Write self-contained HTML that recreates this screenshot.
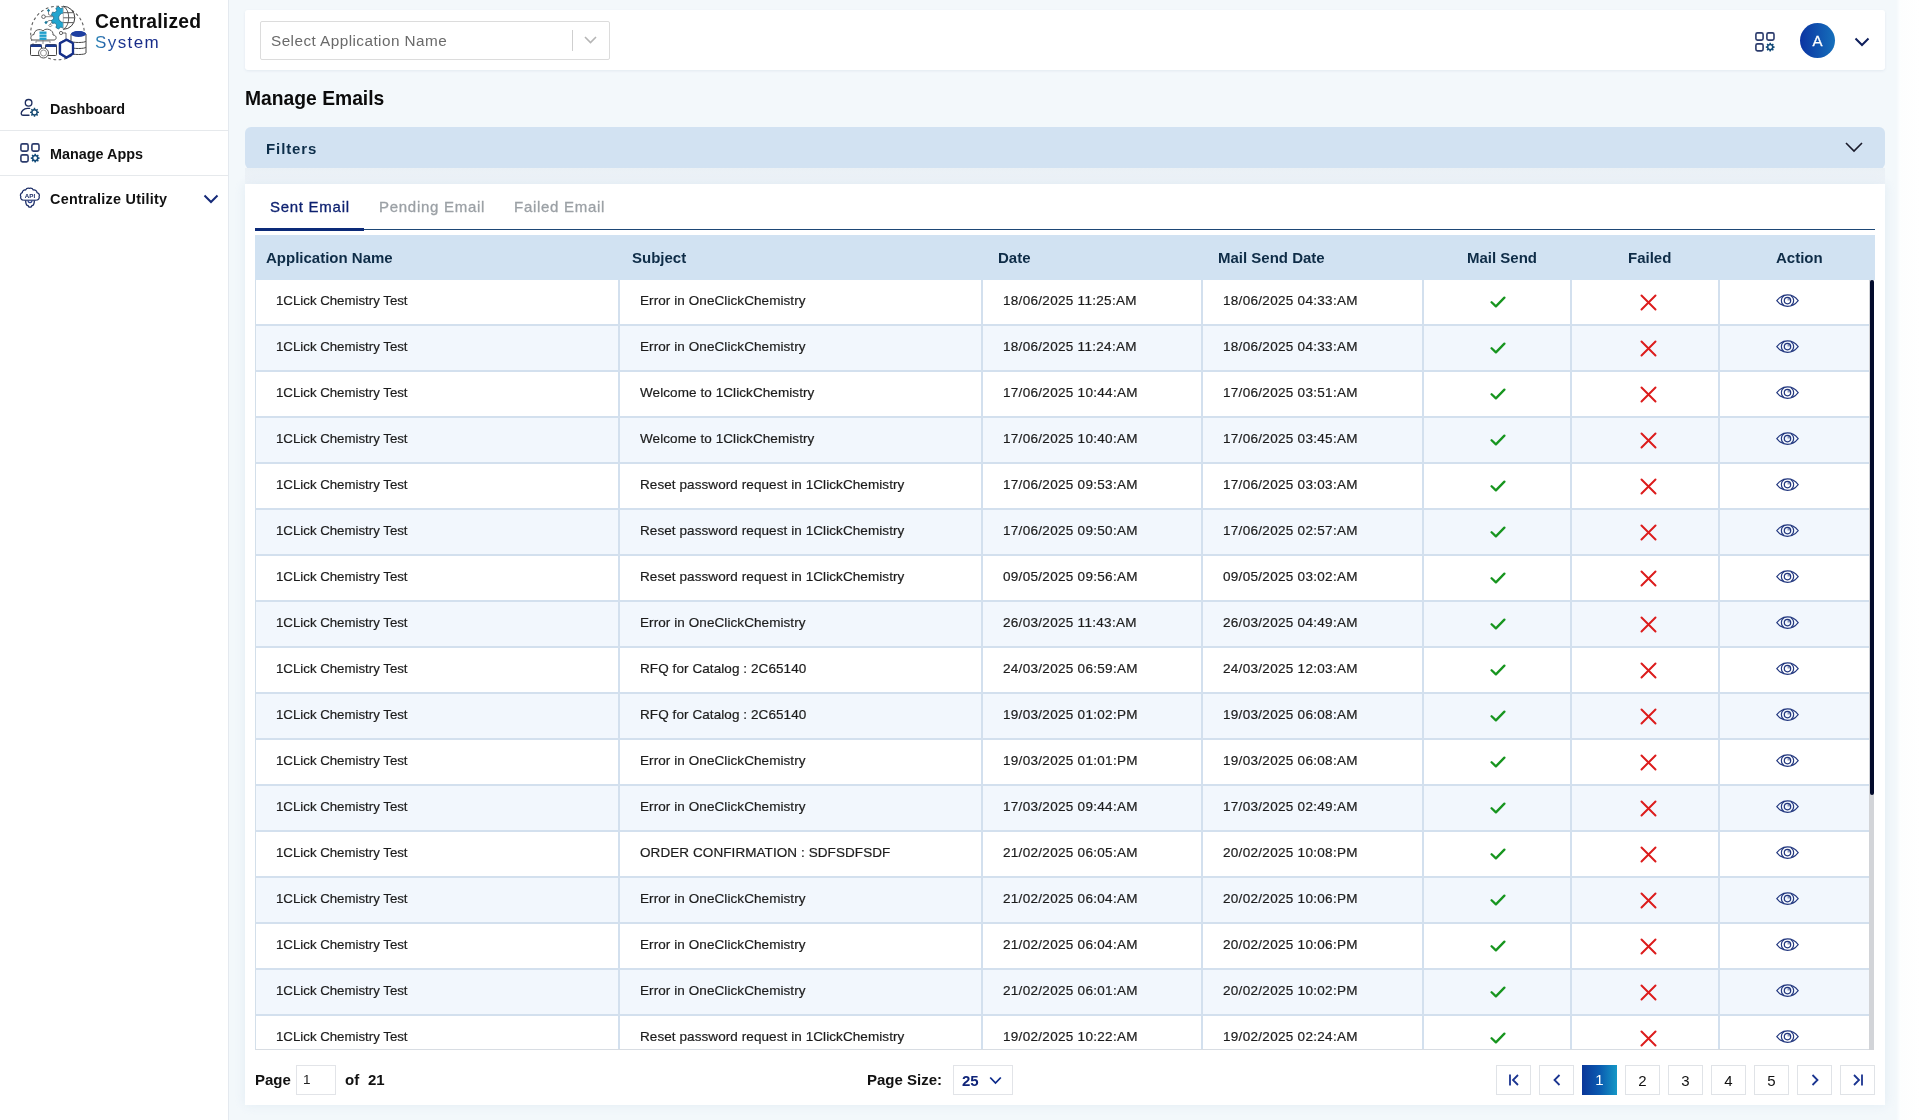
<!DOCTYPE html>
<html><head><meta charset="utf-8"><title>Manage Emails</title>
<style>
*{box-sizing:border-box;margin:0;padding:0}
html,body{width:1920px;height:1120px;overflow:hidden}
body{font-family:"Liberation Sans",sans-serif;background:#f3f8fb;position:relative;color:#222}
.abs{position:absolute}
#side{position:absolute;left:0;top:0;width:229px;height:1120px;background:#fff;border-right:1px solid #e4e9ef}
.nav{position:absolute;left:0;width:228px;height:45px}
.nav .t{position:absolute;left:50px;font-weight:bold;font-size:14.4px;color:#111;white-space:nowrap}
.sep{position:absolute;left:0;width:228px;height:1px;background:#e6e9ec}
#topbar{position:absolute;left:245px;top:10px;width:1640px;height:60px;background:#fff;border-radius:3px;box-shadow:0 1px 3px rgba(40,70,110,.08)}
#sel{position:absolute;left:15px;top:11px;width:350px;height:39px;border:1px solid #dcdcdc;border-radius:2px;background:#fff}
#title{position:absolute;left:245px;top:87.8px;font-size:19.3px;font-weight:bold;color:#0b0b0b;white-space:nowrap}
#filters{position:absolute;left:245px;top:127px;width:1640px;height:42px;background:#d2e2f2;border-radius:6px}
#card{position:absolute;left:245px;top:184px;width:1640px;height:921px;background:#fff;box-shadow:0 0 10px rgba(215,228,240,.6)}
.tab{position:absolute;top:13.5px;font-size:15px;letter-spacing:.72px;-webkit-text-stroke:.3px;white-space:nowrap}
#tabline{position:absolute;left:10px;top:45px;width:1620px;height:1px;background:#1e4876}
#tabact{position:absolute;left:10px;top:44px;width:109px;height:3px;background:#0c2a78}
#thead{position:absolute;left:10px;top:51px;width:1620px;height:45px;background:#d1e2f2}
.th{position:absolute;top:0;height:45px;line-height:45px;font-size:15px;font-weight:bold;color:#0e2c47;white-space:nowrap}
#tbody{position:absolute;left:10px;top:96px;width:1614px;height:770px;overflow:hidden;border-left:1px solid #d3dfea;border-bottom:1px solid #d8dde3}
.r{position:absolute;left:0;width:1613px;height:46px;background:#fff}
.r.alt{background:#f2f7fd}
.c{position:absolute;top:0;height:46px;border-right:2px solid #d3e0ee;border-bottom:2px solid #d3e0ee}
.c span{position:absolute;left:20px;top:13px;font-size:13.5px;color:#1c1c1c;-webkit-text-stroke:.2px #1c1c1c;white-space:nowrap}
.c span.dt{letter-spacing:.3px}
.c span.sj{letter-spacing:.08px}
.c i{position:absolute;display:block;font-style:normal;line-height:0}
.chk{left:66px;top:16px}
.crs{left:68px;top:14px}
.eye{left:56px;top:14px}
#sb{position:absolute;left:1624px;top:96px;width:5px;height:770px;background:#d2d4d8}
#sbt{position:absolute;left:1625px;top:96px;width:4px;height:515px;background:#030b2c;border-radius:2px}
.pl{position:absolute;font-size:15px;font-weight:bold;color:#111;white-space:nowrap}
.pb{position:absolute;top:881px;width:35px;height:30px;border:1px solid #e0e3e7;background:#fff;text-align:center;line-height:29px;font-size:15px;color:#111}
</style></head><body>
<div id="root" style="position:absolute;left:0;top:0;width:1920px;height:1120px;will-change:transform">

<div id="side">
  <svg class="abs" style="left:28px;top:4px" width="60" height="58" viewBox="0 0 60 58">
    <circle cx="29.5" cy="29" r="26.8" fill="none" stroke="#5a5a5a" stroke-width="1.05" stroke-dasharray="2.8 2.6"/>
    <defs><clipPath id="lh"><rect x="0" y="0" width="35.3" height="30"/></clipPath><linearGradient id="bd" x1="0" y1="0" x2="1" y2="0"><stop offset="0" stop-color="#1f9fcc"/><stop offset="1" stop-color="#17307a"/></linearGradient></defs>
    <path d="M15.5 12.7 H25 M20.5 8 V10.5 L24 12 M18 18.5 L21 16.5 H25 M22.3 20 L25 17" fill="none" stroke="#6a6a6a" stroke-width=".8"/>
    <g clip-path="url(#lh)"><path d="M44.87 11.70 L47.39 12.19 L47.39 15.41 L44.87 15.90 L43.98 18.34 L45.60 20.34 L43.53 22.81 L41.28 21.56 L39.03 22.86 L38.99 25.43 L35.81 25.99 L34.89 23.59 L32.34 23.14 L30.65 25.08 L27.86 23.47 L28.69 21.04 L27.03 19.05 L24.49 19.45 L23.38 16.42 L25.59 15.10 L25.59 12.50 L23.38 11.18 L24.49 8.15 L27.03 8.55 L28.69 6.56 L27.86 4.13 L30.65 2.52 L32.34 4.46 L34.89 4.01 L35.81 1.61 L38.99 2.17 L39.03 4.74 L41.28 6.04 L43.53 4.79 L45.60 7.26 L43.98 9.26 Z M39.90 13.80 A4.6 4.6 0 1 0 30.70 13.80 A4.6 4.6 0 1 0 39.90 13.80 Z" fill="#22a5cf" fill-rule="evenodd" stroke="#17607e" stroke-width=".7"/></g>
    <path d="M35.3 2.3 A11.5 11.5 0 0 1 35.3 25.3" fill="#fff" stroke="#3a3a3a" stroke-width="1"/>
    <path d="M35.3 2.3 V25.3" stroke="#b0b0b0" stroke-width=".9"/>
    <path d="M35.3 2.3 C42.5 5.5 42.5 22 35.3 25.3 M35.3 8.7 H45.6 M35.3 13.8 H46.8 M35.3 18.6 H45.6" fill="none" stroke="#4a4a4a" stroke-width=".9"/>
    <path d="M20.5 4.8 L22.1 6.5 L20.5 8.2 L18.9 6.5 Z" fill="#1a7a9a"/>
    <circle cx="15.5" cy="12.7" r="1.8" fill="#fff" stroke="#555" stroke-width=".9"/>
    <path d="M18 16.8 L19.7 18.5 L18 20.2 L16.3 18.5 Z" fill="#1a7a9a"/>
    <path d="M22.3 20 L23.8 21.5 L22.3 23 L20.8 21.5 Z" fill="#fff" stroke="#666" stroke-width=".8"/>
    <path d="M5 36 C2 36 2 31 6 30.5 C6 26 12 24 15 27 C18 23 26 26 25 31 C29 31 29 36 26 36 Z" fill="#fff" stroke="#555" stroke-width="1"/>
    <rect x="11.5" y="27.5" width="7" height="2.4" fill="#1f9fcc"/><rect x="11.5" y="30.5" width="7" height="2.4" fill="#1f9fcc"/><rect x="11.5" y="33.5" width="7" height="2.4" fill="#1f9fcc"/>
    <path d="M15 36 v4 M8 39 v-2 H22 v2" fill="none" stroke="#777" stroke-width=".8"/>
    <rect x="2.5" y="40.5" width="11" height="11" rx="1" fill="#fff" stroke="#444" stroke-width="1"/>
    <rect x="2.5" y="40.5" width="11" height="2.5" fill="#1a3a8f"/>
    <rect x="17.5" y="40.5" width="11" height="11" rx="1" fill="#fff" stroke="#444" stroke-width="1"/>
    <rect x="17.5" y="40.5" width="11" height="2.5" fill="#1a3a8f"/>
    <circle cx="15.5" cy="49" r="5" fill="#fff" stroke="#555" stroke-width="1"/>
    <circle cx="15.5" cy="49" r="3" fill="#fff" stroke="#777" stroke-width=".8"/>
    <circle cx="33" cy="29" r="1.6" fill="none" stroke="#444" stroke-width=".8"/>
    <path d="M34.5 29 H38 V36" fill="none" stroke="#444" stroke-width=".8"/>
    <path d="M38.5 35.8 L45 39.3 V49.6 L38.5 53.6 L32 49.6 V39.3 Z" fill="#fff" stroke="#16308a" stroke-width="2.3" stroke-linejoin="round"/>
    <ellipse cx="50.5" cy="30" rx="7.5" ry="3" fill="#1e3fa0"/>
    <path d="M43 30 V49 C43 51 58 51 58 49 V30" fill="#fff" stroke="#444" stroke-width="1"/>
    <path d="M43 37 C43 39 58 39 58 37 M43 43 C43 45 58 45 58 43" fill="none" stroke="#444" stroke-width="1"/>
    <ellipse cx="50.5" cy="30" rx="7.5" ry="3" fill="#1e3fa0"/>
    <path d="M38.5 35.8 L45 39.3 V49.6 L38.5 53.6 L32 49.6 V39.3 Z" fill="#fff" stroke="#16308a" stroke-width="2.3" stroke-linejoin="round"/>
  </svg>
  <div class="abs" style="left:95px;top:11px;font-size:19.3px;letter-spacing:.2px;font-weight:bold;color:#0d0d0d;white-space:nowrap">Centralized</div>
  <div class="abs" style="left:95px;top:33px;font-size:17px;letter-spacing:1.4px;white-space:nowrap;background:linear-gradient(90deg,#2a88b8,#1c3a96 32%,#172a86 55%,#152a8a);-webkit-background-clip:text;background-clip:text;color:transparent">System</div>

  <div class="nav" style="top:86px">
    <svg class="abs" style="left:15px;top:9px" width="30" height="30" viewBox="0 0 30 30"><circle cx="13.6" cy="7.8" r="3.3" fill="none" stroke="#1d2d5e" stroke-width="1.35"/><path d="M14.6 13.4 H12.5 C8.5 13.4 6.2 16.3 6.2 18.6 C6.2 19.7 6.8 20.2 7.8 20.2 H14" fill="none" stroke="#1d2d5e" stroke-width="1.35" stroke-linecap="round"/><path d="M22.80 16.48 L23.95 16.63 L23.95 17.97 L22.80 18.12 L22.41 19.05 L23.12 19.97 L22.17 20.92 L21.25 20.21 L20.32 20.60 L20.17 21.75 L18.83 21.75 L18.68 20.60 L17.75 20.21 L16.83 20.92 L15.88 19.97 L16.59 19.05 L16.20 18.12 L15.05 17.97 L15.05 16.63 L16.20 16.48 L16.59 15.55 L15.88 14.63 L16.83 13.68 L17.75 14.39 L18.68 14.00 L18.83 12.85 L20.17 12.85 L20.32 14.00 L21.25 14.39 L22.17 13.68 L23.12 14.63 L22.41 15.55 Z M21.40 17.30 A1.9 1.9 0 1 0 17.60 17.30 A1.9 1.9 0 1 0 21.40 17.30 Z" fill="#164a72" fill-rule="evenodd"/></svg>
    <div class="t" style="top:14.5px">Dashboard</div>
  </div>
  <div class="sep" style="top:130px"></div>
  <div class="nav" style="top:131px">
    <svg class="abs" style="left:15px;top:7px" width="30" height="30" viewBox="0 0 30 30"><rect x="5.9" y="5.9" width="7.2" height="7.2" rx="1.6" fill="none" stroke="#2b3b6c" stroke-width="1.6"/><rect x="16.9" y="5.9" width="7.1" height="7.2" rx="1.6" fill="none" stroke="#2b3b6c" stroke-width="1.6"/><rect x="5.9" y="16.9" width="7.2" height="7.0" rx="1.6" fill="none" stroke="#2b3b6c" stroke-width="1.6"/><path d="M23.50 19.28 L24.65 19.43 L24.65 20.77 L23.50 20.92 L23.11 21.85 L23.82 22.77 L22.87 23.72 L21.95 23.01 L21.02 23.40 L20.87 24.55 L19.53 24.55 L19.38 23.40 L18.45 23.01 L17.53 23.72 L16.58 22.77 L17.29 21.85 L16.90 20.92 L15.75 20.77 L15.75 19.43 L16.90 19.28 L17.29 18.35 L16.58 17.43 L17.53 16.48 L18.45 17.19 L19.38 16.80 L19.53 15.65 L20.87 15.65 L21.02 16.80 L21.95 17.19 L22.87 16.48 L23.82 17.43 L23.11 18.35 Z M22.00 20.10 A1.8 1.8 0 1 0 18.40 20.10 A1.8 1.8 0 1 0 22.00 20.10 Z" fill="#124a78" fill-rule="evenodd"/></svg>
    <div class="t" style="top:15px">Manage Apps</div>
  </div>
  <div class="sep" style="top:175px"></div>
  <div class="nav" style="top:176px">
    <svg class="abs" style="left:15px;top:7px" width="30" height="30" viewBox="0 0 30 30"><path d="M8.2 17.2 C6 16.8 5.3 14.9 5.8 13.4 C4.9 12.2 5.6 10 7.3 9.6 C7.3 7.8 9 6.6 10.6 7 C11.3 5.6 12.9 5 14.3 5.3 C15.6 5 17.6 5.5 18.3 7 C20.2 6.6 22 7.9 22 9.6 C23.9 10 24.9 12 24.1 13.5 C24.7 15.3 23.5 17 21.6 17.2" fill="none" stroke="#1b2c66" stroke-width="1.25"/><text x="15" y="14.6" text-anchor="middle" font-family="Liberation Sans" font-weight="bold" font-size="6.2" fill="#1b2c66">API</text><path d="M8.2 17.2 H21.6" stroke="#1b2c66" stroke-width="1.1"/><path d="M10.6 17.4 C10.6 19 11 20.6 11.6 22 L13 22.6 L14 24.2 H16 L17 22.6 L18.4 22 C19 20.6 19.4 19 19.4 17.4" fill="none" stroke="#1b2c66" stroke-width="1.3"/><path d="M13 17.6 C13 20.2 17 20.2 17 17.6" fill="none" stroke="#2a3f8a" stroke-width="1.2"/></svg>
    <div class="t" style="top:15px;letter-spacing:.25px">Centralize Utility</div>
    <svg class="abs" style="left:203px;top:18px" width="16" height="10" viewBox="0 0 16 10"><path d="M1.5 1.5 L8 8 L14.5 1.5" fill="none" stroke="#152a78" stroke-width="2"/></svg>
  </div>
</div>

<div class="abs" style="left:1896px;top:0;width:24px;height:1120px;background:linear-gradient(90deg,rgba(255,255,255,0),#fdfefe 5px,#fff)"></div>
<div id="topbar">
  <div id="sel">
    <div class="abs" style="left:10px;top:10px;font-size:15.3px;letter-spacing:.45px;color:#6a6a6a;white-space:nowrap">Select Application Name</div>
    <div class="abs" style="left:311px;top:8px;width:1px;height:21px;background:#cfcfcf"></div>
    <svg class="abs" style="left:323px;top:14px" width="13" height="8" viewBox="0 0 13 8"><path d="M1 1 L6.5 6.5 L12 1" fill="none" stroke="#b5b5b5" stroke-width="1.6"/></svg>
  </div>
  <svg class="abs" style="left:1505px;top:17px" width="30" height="30" viewBox="0 0 30 30"><rect x="5.9" y="5.9" width="7.2" height="7.2" rx="1.6" fill="none" stroke="#2b3b6c" stroke-width="1.6"/><rect x="16.9" y="5.9" width="7.1" height="7.2" rx="1.6" fill="none" stroke="#2b3b6c" stroke-width="1.6"/><rect x="5.9" y="16.9" width="7.2" height="7.0" rx="1.6" fill="none" stroke="#2b3b6c" stroke-width="1.6"/><path d="M23.50 19.28 L24.65 19.43 L24.65 20.77 L23.50 20.92 L23.11 21.85 L23.82 22.77 L22.87 23.72 L21.95 23.01 L21.02 23.40 L20.87 24.55 L19.53 24.55 L19.38 23.40 L18.45 23.01 L17.53 23.72 L16.58 22.77 L17.29 21.85 L16.90 20.92 L15.75 20.77 L15.75 19.43 L16.90 19.28 L17.29 18.35 L16.58 17.43 L17.53 16.48 L18.45 17.19 L19.38 16.80 L19.53 15.65 L20.87 15.65 L21.02 16.80 L21.95 17.19 L22.87 16.48 L23.82 17.43 L23.11 18.35 Z M22.00 20.10 A1.8 1.8 0 1 0 18.40 20.10 A1.8 1.8 0 1 0 22.00 20.10 Z" fill="#124a78" fill-rule="evenodd"/></svg>
  <div class="abs" style="left:1555px;top:13px;width:35px;height:35px;border-radius:50%;background:linear-gradient(90deg,#0b34a2,#1670bb);color:#fff;font-size:15px;-webkit-text-stroke:.3px #fff;text-align:center;line-height:35px">A</div>
  <svg class="abs" style="left:1609px;top:27px" width="16" height="10" viewBox="0 0 16 10"><path d="M1.5 1.5 L8 8 L14.5 1.5" fill="none" stroke="#0f1f5c" stroke-width="2"/></svg>
</div>

<div id="title">Manage Emails</div>

<div id="filters">
  <div class="abs" style="left:21px;top:12.8px;font-size:15px;font-weight:bold;letter-spacing:.9px;color:#0d2e4a">Filters</div>
  <svg class="abs" style="left:1600px;top:15px" width="18" height="11" viewBox="0 0 18 11"><path d="M1 1 L9 9 L17 1" fill="none" stroke="#1a1a2a" stroke-width="1.6"/></svg>
</div>

<div class="abs" style="left:245px;top:168px;width:1640px;height:16px;background:linear-gradient(#eaf0f5,#eef3f8)"></div>
<div id="card">
  <div class="tab" style="left:25px;color:#0d2170">Sent Email</div>
  <div class="tab" style="left:134px;color:#9ba0a5">Pending Email</div>
  <div class="tab" style="left:269px;color:#9ba0a5">Failed Email</div>
  <div id="tabline"></div>
  <div id="tabact"></div>
  <div id="thead">
    <div class="th" style="left:11px">Application Name</div>
    <div class="th" style="left:377px">Subject</div>
    <div class="th" style="left:743px">Date</div>
    <div class="th" style="left:963px">Mail Send Date</div>
    <div class="th" style="left:1212px">Mail Send</div>
    <div class="th" style="left:1373px">Failed</div>
    <div class="th" style="left:1521px">Action</div>
  </div>
  <div id="tbody">
    <div class="r" style="top:0px"><div class="c" style="left:0;width:364px"><span style="font-size:13.25px">1CLick Chemistry Test</span></div><div class="c" style="left:364px;width:363px"><span class="sj">Error in OneClickChemistry</span></div><div class="c" style="left:727px;width:220px"><span class="dt">18/06/2025 11:25:AM</span></div><div class="c" style="left:947px;width:221px"><span class="dt">18/06/2025 04:33:AM</span></div><div class="c ic" style="left:1168px;width:148px"><i class="chk"><svg width="16" height="12" viewBox="0 0 16 12"><path d="M1.6 6.2 L5.9 10.4 L14.4 1.6" fill="none" stroke="#17951f" stroke-width="2.3" stroke-linecap="round" stroke-linejoin="round"/></svg></i></div><div class="c ic" style="left:1316px;width:148px"><i class="crs"><svg width="17" height="17" viewBox="0 0 17 17"><path d="M1.5 1.5 L15.5 15.5 M15.5 1.5 L1.5 15.5" fill="none" stroke="#dc1c1c" stroke-width="2" stroke-linecap="round"/></svg></i></div><div class="c ic" style="left:1464px;width:150px;border-right:none"><i class="eye"><svg width="23" height="14" viewBox="0 0 23 14"><path d="M0.8 6.6 C4.5 1.8 8 0.9 11.5 0.9 C15 0.9 18.5 1.8 22.2 6.6 C18.5 11.4 15 12.3 11.5 12.3 C8 12.3 4.5 11.4 0.8 6.6 Z" fill="none" stroke="#22377f" stroke-width="1.15"/><path d="M8.2 1.6 A5.8 5.8 0 0 0 8.2 11.6 M14.8 1.6 A5.8 5.8 0 0 1 14.8 11.6" fill="none" stroke="#22377f" stroke-width="1.1"/><circle cx="11.5" cy="6.6" r="3.2" fill="none" stroke="#22377f" stroke-width="1.25"/><path d="M11.5 3.4 A3.2 3.2 0 0 1 14.7 6.6 L11.5 6.6 Z" fill="#22377f" opacity=".5"/></svg></i></div></div><div class="r alt" style="top:46px"><div class="c" style="left:0;width:364px"><span style="font-size:13.25px">1CLick Chemistry Test</span></div><div class="c" style="left:364px;width:363px"><span class="sj">Error in OneClickChemistry</span></div><div class="c" style="left:727px;width:220px"><span class="dt">18/06/2025 11:24:AM</span></div><div class="c" style="left:947px;width:221px"><span class="dt">18/06/2025 04:33:AM</span></div><div class="c ic" style="left:1168px;width:148px"><i class="chk"><svg width="16" height="12" viewBox="0 0 16 12"><path d="M1.6 6.2 L5.9 10.4 L14.4 1.6" fill="none" stroke="#17951f" stroke-width="2.3" stroke-linecap="round" stroke-linejoin="round"/></svg></i></div><div class="c ic" style="left:1316px;width:148px"><i class="crs"><svg width="17" height="17" viewBox="0 0 17 17"><path d="M1.5 1.5 L15.5 15.5 M15.5 1.5 L1.5 15.5" fill="none" stroke="#dc1c1c" stroke-width="2" stroke-linecap="round"/></svg></i></div><div class="c ic" style="left:1464px;width:150px;border-right:none"><i class="eye"><svg width="23" height="14" viewBox="0 0 23 14"><path d="M0.8 6.6 C4.5 1.8 8 0.9 11.5 0.9 C15 0.9 18.5 1.8 22.2 6.6 C18.5 11.4 15 12.3 11.5 12.3 C8 12.3 4.5 11.4 0.8 6.6 Z" fill="none" stroke="#22377f" stroke-width="1.15"/><path d="M8.2 1.6 A5.8 5.8 0 0 0 8.2 11.6 M14.8 1.6 A5.8 5.8 0 0 1 14.8 11.6" fill="none" stroke="#22377f" stroke-width="1.1"/><circle cx="11.5" cy="6.6" r="3.2" fill="none" stroke="#22377f" stroke-width="1.25"/><path d="M11.5 3.4 A3.2 3.2 0 0 1 14.7 6.6 L11.5 6.6 Z" fill="#22377f" opacity=".5"/></svg></i></div></div><div class="r" style="top:92px"><div class="c" style="left:0;width:364px"><span style="font-size:13.25px">1CLick Chemistry Test</span></div><div class="c" style="left:364px;width:363px"><span class="sj">Welcome to 1ClickChemistry</span></div><div class="c" style="left:727px;width:220px"><span class="dt">17/06/2025 10:44:AM</span></div><div class="c" style="left:947px;width:221px"><span class="dt">17/06/2025 03:51:AM</span></div><div class="c ic" style="left:1168px;width:148px"><i class="chk"><svg width="16" height="12" viewBox="0 0 16 12"><path d="M1.6 6.2 L5.9 10.4 L14.4 1.6" fill="none" stroke="#17951f" stroke-width="2.3" stroke-linecap="round" stroke-linejoin="round"/></svg></i></div><div class="c ic" style="left:1316px;width:148px"><i class="crs"><svg width="17" height="17" viewBox="0 0 17 17"><path d="M1.5 1.5 L15.5 15.5 M15.5 1.5 L1.5 15.5" fill="none" stroke="#dc1c1c" stroke-width="2" stroke-linecap="round"/></svg></i></div><div class="c ic" style="left:1464px;width:150px;border-right:none"><i class="eye"><svg width="23" height="14" viewBox="0 0 23 14"><path d="M0.8 6.6 C4.5 1.8 8 0.9 11.5 0.9 C15 0.9 18.5 1.8 22.2 6.6 C18.5 11.4 15 12.3 11.5 12.3 C8 12.3 4.5 11.4 0.8 6.6 Z" fill="none" stroke="#22377f" stroke-width="1.15"/><path d="M8.2 1.6 A5.8 5.8 0 0 0 8.2 11.6 M14.8 1.6 A5.8 5.8 0 0 1 14.8 11.6" fill="none" stroke="#22377f" stroke-width="1.1"/><circle cx="11.5" cy="6.6" r="3.2" fill="none" stroke="#22377f" stroke-width="1.25"/><path d="M11.5 3.4 A3.2 3.2 0 0 1 14.7 6.6 L11.5 6.6 Z" fill="#22377f" opacity=".5"/></svg></i></div></div><div class="r alt" style="top:138px"><div class="c" style="left:0;width:364px"><span style="font-size:13.25px">1CLick Chemistry Test</span></div><div class="c" style="left:364px;width:363px"><span class="sj">Welcome to 1ClickChemistry</span></div><div class="c" style="left:727px;width:220px"><span class="dt">17/06/2025 10:40:AM</span></div><div class="c" style="left:947px;width:221px"><span class="dt">17/06/2025 03:45:AM</span></div><div class="c ic" style="left:1168px;width:148px"><i class="chk"><svg width="16" height="12" viewBox="0 0 16 12"><path d="M1.6 6.2 L5.9 10.4 L14.4 1.6" fill="none" stroke="#17951f" stroke-width="2.3" stroke-linecap="round" stroke-linejoin="round"/></svg></i></div><div class="c ic" style="left:1316px;width:148px"><i class="crs"><svg width="17" height="17" viewBox="0 0 17 17"><path d="M1.5 1.5 L15.5 15.5 M15.5 1.5 L1.5 15.5" fill="none" stroke="#dc1c1c" stroke-width="2" stroke-linecap="round"/></svg></i></div><div class="c ic" style="left:1464px;width:150px;border-right:none"><i class="eye"><svg width="23" height="14" viewBox="0 0 23 14"><path d="M0.8 6.6 C4.5 1.8 8 0.9 11.5 0.9 C15 0.9 18.5 1.8 22.2 6.6 C18.5 11.4 15 12.3 11.5 12.3 C8 12.3 4.5 11.4 0.8 6.6 Z" fill="none" stroke="#22377f" stroke-width="1.15"/><path d="M8.2 1.6 A5.8 5.8 0 0 0 8.2 11.6 M14.8 1.6 A5.8 5.8 0 0 1 14.8 11.6" fill="none" stroke="#22377f" stroke-width="1.1"/><circle cx="11.5" cy="6.6" r="3.2" fill="none" stroke="#22377f" stroke-width="1.25"/><path d="M11.5 3.4 A3.2 3.2 0 0 1 14.7 6.6 L11.5 6.6 Z" fill="#22377f" opacity=".5"/></svg></i></div></div><div class="r" style="top:184px"><div class="c" style="left:0;width:364px"><span style="font-size:13.25px">1CLick Chemistry Test</span></div><div class="c" style="left:364px;width:363px"><span class="sj">Reset password request in 1ClickChemistry</span></div><div class="c" style="left:727px;width:220px"><span class="dt">17/06/2025 09:53:AM</span></div><div class="c" style="left:947px;width:221px"><span class="dt">17/06/2025 03:03:AM</span></div><div class="c ic" style="left:1168px;width:148px"><i class="chk"><svg width="16" height="12" viewBox="0 0 16 12"><path d="M1.6 6.2 L5.9 10.4 L14.4 1.6" fill="none" stroke="#17951f" stroke-width="2.3" stroke-linecap="round" stroke-linejoin="round"/></svg></i></div><div class="c ic" style="left:1316px;width:148px"><i class="crs"><svg width="17" height="17" viewBox="0 0 17 17"><path d="M1.5 1.5 L15.5 15.5 M15.5 1.5 L1.5 15.5" fill="none" stroke="#dc1c1c" stroke-width="2" stroke-linecap="round"/></svg></i></div><div class="c ic" style="left:1464px;width:150px;border-right:none"><i class="eye"><svg width="23" height="14" viewBox="0 0 23 14"><path d="M0.8 6.6 C4.5 1.8 8 0.9 11.5 0.9 C15 0.9 18.5 1.8 22.2 6.6 C18.5 11.4 15 12.3 11.5 12.3 C8 12.3 4.5 11.4 0.8 6.6 Z" fill="none" stroke="#22377f" stroke-width="1.15"/><path d="M8.2 1.6 A5.8 5.8 0 0 0 8.2 11.6 M14.8 1.6 A5.8 5.8 0 0 1 14.8 11.6" fill="none" stroke="#22377f" stroke-width="1.1"/><circle cx="11.5" cy="6.6" r="3.2" fill="none" stroke="#22377f" stroke-width="1.25"/><path d="M11.5 3.4 A3.2 3.2 0 0 1 14.7 6.6 L11.5 6.6 Z" fill="#22377f" opacity=".5"/></svg></i></div></div><div class="r alt" style="top:230px"><div class="c" style="left:0;width:364px"><span style="font-size:13.25px">1CLick Chemistry Test</span></div><div class="c" style="left:364px;width:363px"><span class="sj">Reset password request in 1ClickChemistry</span></div><div class="c" style="left:727px;width:220px"><span class="dt">17/06/2025 09:50:AM</span></div><div class="c" style="left:947px;width:221px"><span class="dt">17/06/2025 02:57:AM</span></div><div class="c ic" style="left:1168px;width:148px"><i class="chk"><svg width="16" height="12" viewBox="0 0 16 12"><path d="M1.6 6.2 L5.9 10.4 L14.4 1.6" fill="none" stroke="#17951f" stroke-width="2.3" stroke-linecap="round" stroke-linejoin="round"/></svg></i></div><div class="c ic" style="left:1316px;width:148px"><i class="crs"><svg width="17" height="17" viewBox="0 0 17 17"><path d="M1.5 1.5 L15.5 15.5 M15.5 1.5 L1.5 15.5" fill="none" stroke="#dc1c1c" stroke-width="2" stroke-linecap="round"/></svg></i></div><div class="c ic" style="left:1464px;width:150px;border-right:none"><i class="eye"><svg width="23" height="14" viewBox="0 0 23 14"><path d="M0.8 6.6 C4.5 1.8 8 0.9 11.5 0.9 C15 0.9 18.5 1.8 22.2 6.6 C18.5 11.4 15 12.3 11.5 12.3 C8 12.3 4.5 11.4 0.8 6.6 Z" fill="none" stroke="#22377f" stroke-width="1.15"/><path d="M8.2 1.6 A5.8 5.8 0 0 0 8.2 11.6 M14.8 1.6 A5.8 5.8 0 0 1 14.8 11.6" fill="none" stroke="#22377f" stroke-width="1.1"/><circle cx="11.5" cy="6.6" r="3.2" fill="none" stroke="#22377f" stroke-width="1.25"/><path d="M11.5 3.4 A3.2 3.2 0 0 1 14.7 6.6 L11.5 6.6 Z" fill="#22377f" opacity=".5"/></svg></i></div></div><div class="r" style="top:276px"><div class="c" style="left:0;width:364px"><span style="font-size:13.25px">1CLick Chemistry Test</span></div><div class="c" style="left:364px;width:363px"><span class="sj">Reset password request in 1ClickChemistry</span></div><div class="c" style="left:727px;width:220px"><span class="dt">09/05/2025 09:56:AM</span></div><div class="c" style="left:947px;width:221px"><span class="dt">09/05/2025 03:02:AM</span></div><div class="c ic" style="left:1168px;width:148px"><i class="chk"><svg width="16" height="12" viewBox="0 0 16 12"><path d="M1.6 6.2 L5.9 10.4 L14.4 1.6" fill="none" stroke="#17951f" stroke-width="2.3" stroke-linecap="round" stroke-linejoin="round"/></svg></i></div><div class="c ic" style="left:1316px;width:148px"><i class="crs"><svg width="17" height="17" viewBox="0 0 17 17"><path d="M1.5 1.5 L15.5 15.5 M15.5 1.5 L1.5 15.5" fill="none" stroke="#dc1c1c" stroke-width="2" stroke-linecap="round"/></svg></i></div><div class="c ic" style="left:1464px;width:150px;border-right:none"><i class="eye"><svg width="23" height="14" viewBox="0 0 23 14"><path d="M0.8 6.6 C4.5 1.8 8 0.9 11.5 0.9 C15 0.9 18.5 1.8 22.2 6.6 C18.5 11.4 15 12.3 11.5 12.3 C8 12.3 4.5 11.4 0.8 6.6 Z" fill="none" stroke="#22377f" stroke-width="1.15"/><path d="M8.2 1.6 A5.8 5.8 0 0 0 8.2 11.6 M14.8 1.6 A5.8 5.8 0 0 1 14.8 11.6" fill="none" stroke="#22377f" stroke-width="1.1"/><circle cx="11.5" cy="6.6" r="3.2" fill="none" stroke="#22377f" stroke-width="1.25"/><path d="M11.5 3.4 A3.2 3.2 0 0 1 14.7 6.6 L11.5 6.6 Z" fill="#22377f" opacity=".5"/></svg></i></div></div><div class="r alt" style="top:322px"><div class="c" style="left:0;width:364px"><span style="font-size:13.25px">1CLick Chemistry Test</span></div><div class="c" style="left:364px;width:363px"><span class="sj">Error in OneClickChemistry</span></div><div class="c" style="left:727px;width:220px"><span class="dt">26/03/2025 11:43:AM</span></div><div class="c" style="left:947px;width:221px"><span class="dt">26/03/2025 04:49:AM</span></div><div class="c ic" style="left:1168px;width:148px"><i class="chk"><svg width="16" height="12" viewBox="0 0 16 12"><path d="M1.6 6.2 L5.9 10.4 L14.4 1.6" fill="none" stroke="#17951f" stroke-width="2.3" stroke-linecap="round" stroke-linejoin="round"/></svg></i></div><div class="c ic" style="left:1316px;width:148px"><i class="crs"><svg width="17" height="17" viewBox="0 0 17 17"><path d="M1.5 1.5 L15.5 15.5 M15.5 1.5 L1.5 15.5" fill="none" stroke="#dc1c1c" stroke-width="2" stroke-linecap="round"/></svg></i></div><div class="c ic" style="left:1464px;width:150px;border-right:none"><i class="eye"><svg width="23" height="14" viewBox="0 0 23 14"><path d="M0.8 6.6 C4.5 1.8 8 0.9 11.5 0.9 C15 0.9 18.5 1.8 22.2 6.6 C18.5 11.4 15 12.3 11.5 12.3 C8 12.3 4.5 11.4 0.8 6.6 Z" fill="none" stroke="#22377f" stroke-width="1.15"/><path d="M8.2 1.6 A5.8 5.8 0 0 0 8.2 11.6 M14.8 1.6 A5.8 5.8 0 0 1 14.8 11.6" fill="none" stroke="#22377f" stroke-width="1.1"/><circle cx="11.5" cy="6.6" r="3.2" fill="none" stroke="#22377f" stroke-width="1.25"/><path d="M11.5 3.4 A3.2 3.2 0 0 1 14.7 6.6 L11.5 6.6 Z" fill="#22377f" opacity=".5"/></svg></i></div></div><div class="r" style="top:368px"><div class="c" style="left:0;width:364px"><span style="font-size:13.25px">1CLick Chemistry Test</span></div><div class="c" style="left:364px;width:363px"><span class="sj">RFQ for Catalog : 2C65140</span></div><div class="c" style="left:727px;width:220px"><span class="dt">24/03/2025 06:59:AM</span></div><div class="c" style="left:947px;width:221px"><span class="dt">24/03/2025 12:03:AM</span></div><div class="c ic" style="left:1168px;width:148px"><i class="chk"><svg width="16" height="12" viewBox="0 0 16 12"><path d="M1.6 6.2 L5.9 10.4 L14.4 1.6" fill="none" stroke="#17951f" stroke-width="2.3" stroke-linecap="round" stroke-linejoin="round"/></svg></i></div><div class="c ic" style="left:1316px;width:148px"><i class="crs"><svg width="17" height="17" viewBox="0 0 17 17"><path d="M1.5 1.5 L15.5 15.5 M15.5 1.5 L1.5 15.5" fill="none" stroke="#dc1c1c" stroke-width="2" stroke-linecap="round"/></svg></i></div><div class="c ic" style="left:1464px;width:150px;border-right:none"><i class="eye"><svg width="23" height="14" viewBox="0 0 23 14"><path d="M0.8 6.6 C4.5 1.8 8 0.9 11.5 0.9 C15 0.9 18.5 1.8 22.2 6.6 C18.5 11.4 15 12.3 11.5 12.3 C8 12.3 4.5 11.4 0.8 6.6 Z" fill="none" stroke="#22377f" stroke-width="1.15"/><path d="M8.2 1.6 A5.8 5.8 0 0 0 8.2 11.6 M14.8 1.6 A5.8 5.8 0 0 1 14.8 11.6" fill="none" stroke="#22377f" stroke-width="1.1"/><circle cx="11.5" cy="6.6" r="3.2" fill="none" stroke="#22377f" stroke-width="1.25"/><path d="M11.5 3.4 A3.2 3.2 0 0 1 14.7 6.6 L11.5 6.6 Z" fill="#22377f" opacity=".5"/></svg></i></div></div><div class="r alt" style="top:414px"><div class="c" style="left:0;width:364px"><span style="font-size:13.25px">1CLick Chemistry Test</span></div><div class="c" style="left:364px;width:363px"><span class="sj">RFQ for Catalog : 2C65140</span></div><div class="c" style="left:727px;width:220px"><span class="dt">19/03/2025 01:02:PM</span></div><div class="c" style="left:947px;width:221px"><span class="dt">19/03/2025 06:08:AM</span></div><div class="c ic" style="left:1168px;width:148px"><i class="chk"><svg width="16" height="12" viewBox="0 0 16 12"><path d="M1.6 6.2 L5.9 10.4 L14.4 1.6" fill="none" stroke="#17951f" stroke-width="2.3" stroke-linecap="round" stroke-linejoin="round"/></svg></i></div><div class="c ic" style="left:1316px;width:148px"><i class="crs"><svg width="17" height="17" viewBox="0 0 17 17"><path d="M1.5 1.5 L15.5 15.5 M15.5 1.5 L1.5 15.5" fill="none" stroke="#dc1c1c" stroke-width="2" stroke-linecap="round"/></svg></i></div><div class="c ic" style="left:1464px;width:150px;border-right:none"><i class="eye"><svg width="23" height="14" viewBox="0 0 23 14"><path d="M0.8 6.6 C4.5 1.8 8 0.9 11.5 0.9 C15 0.9 18.5 1.8 22.2 6.6 C18.5 11.4 15 12.3 11.5 12.3 C8 12.3 4.5 11.4 0.8 6.6 Z" fill="none" stroke="#22377f" stroke-width="1.15"/><path d="M8.2 1.6 A5.8 5.8 0 0 0 8.2 11.6 M14.8 1.6 A5.8 5.8 0 0 1 14.8 11.6" fill="none" stroke="#22377f" stroke-width="1.1"/><circle cx="11.5" cy="6.6" r="3.2" fill="none" stroke="#22377f" stroke-width="1.25"/><path d="M11.5 3.4 A3.2 3.2 0 0 1 14.7 6.6 L11.5 6.6 Z" fill="#22377f" opacity=".5"/></svg></i></div></div><div class="r" style="top:460px"><div class="c" style="left:0;width:364px"><span style="font-size:13.25px">1CLick Chemistry Test</span></div><div class="c" style="left:364px;width:363px"><span class="sj">Error in OneClickChemistry</span></div><div class="c" style="left:727px;width:220px"><span class="dt">19/03/2025 01:01:PM</span></div><div class="c" style="left:947px;width:221px"><span class="dt">19/03/2025 06:08:AM</span></div><div class="c ic" style="left:1168px;width:148px"><i class="chk"><svg width="16" height="12" viewBox="0 0 16 12"><path d="M1.6 6.2 L5.9 10.4 L14.4 1.6" fill="none" stroke="#17951f" stroke-width="2.3" stroke-linecap="round" stroke-linejoin="round"/></svg></i></div><div class="c ic" style="left:1316px;width:148px"><i class="crs"><svg width="17" height="17" viewBox="0 0 17 17"><path d="M1.5 1.5 L15.5 15.5 M15.5 1.5 L1.5 15.5" fill="none" stroke="#dc1c1c" stroke-width="2" stroke-linecap="round"/></svg></i></div><div class="c ic" style="left:1464px;width:150px;border-right:none"><i class="eye"><svg width="23" height="14" viewBox="0 0 23 14"><path d="M0.8 6.6 C4.5 1.8 8 0.9 11.5 0.9 C15 0.9 18.5 1.8 22.2 6.6 C18.5 11.4 15 12.3 11.5 12.3 C8 12.3 4.5 11.4 0.8 6.6 Z" fill="none" stroke="#22377f" stroke-width="1.15"/><path d="M8.2 1.6 A5.8 5.8 0 0 0 8.2 11.6 M14.8 1.6 A5.8 5.8 0 0 1 14.8 11.6" fill="none" stroke="#22377f" stroke-width="1.1"/><circle cx="11.5" cy="6.6" r="3.2" fill="none" stroke="#22377f" stroke-width="1.25"/><path d="M11.5 3.4 A3.2 3.2 0 0 1 14.7 6.6 L11.5 6.6 Z" fill="#22377f" opacity=".5"/></svg></i></div></div><div class="r alt" style="top:506px"><div class="c" style="left:0;width:364px"><span style="font-size:13.25px">1CLick Chemistry Test</span></div><div class="c" style="left:364px;width:363px"><span class="sj">Error in OneClickChemistry</span></div><div class="c" style="left:727px;width:220px"><span class="dt">17/03/2025 09:44:AM</span></div><div class="c" style="left:947px;width:221px"><span class="dt">17/03/2025 02:49:AM</span></div><div class="c ic" style="left:1168px;width:148px"><i class="chk"><svg width="16" height="12" viewBox="0 0 16 12"><path d="M1.6 6.2 L5.9 10.4 L14.4 1.6" fill="none" stroke="#17951f" stroke-width="2.3" stroke-linecap="round" stroke-linejoin="round"/></svg></i></div><div class="c ic" style="left:1316px;width:148px"><i class="crs"><svg width="17" height="17" viewBox="0 0 17 17"><path d="M1.5 1.5 L15.5 15.5 M15.5 1.5 L1.5 15.5" fill="none" stroke="#dc1c1c" stroke-width="2" stroke-linecap="round"/></svg></i></div><div class="c ic" style="left:1464px;width:150px;border-right:none"><i class="eye"><svg width="23" height="14" viewBox="0 0 23 14"><path d="M0.8 6.6 C4.5 1.8 8 0.9 11.5 0.9 C15 0.9 18.5 1.8 22.2 6.6 C18.5 11.4 15 12.3 11.5 12.3 C8 12.3 4.5 11.4 0.8 6.6 Z" fill="none" stroke="#22377f" stroke-width="1.15"/><path d="M8.2 1.6 A5.8 5.8 0 0 0 8.2 11.6 M14.8 1.6 A5.8 5.8 0 0 1 14.8 11.6" fill="none" stroke="#22377f" stroke-width="1.1"/><circle cx="11.5" cy="6.6" r="3.2" fill="none" stroke="#22377f" stroke-width="1.25"/><path d="M11.5 3.4 A3.2 3.2 0 0 1 14.7 6.6 L11.5 6.6 Z" fill="#22377f" opacity=".5"/></svg></i></div></div><div class="r" style="top:552px"><div class="c" style="left:0;width:364px"><span style="font-size:13.25px">1CLick Chemistry Test</span></div><div class="c" style="left:364px;width:363px"><span class="sj">ORDER CONFIRMATION : SDFSDFSDF</span></div><div class="c" style="left:727px;width:220px"><span class="dt">21/02/2025 06:05:AM</span></div><div class="c" style="left:947px;width:221px"><span class="dt">20/02/2025 10:08:PM</span></div><div class="c ic" style="left:1168px;width:148px"><i class="chk"><svg width="16" height="12" viewBox="0 0 16 12"><path d="M1.6 6.2 L5.9 10.4 L14.4 1.6" fill="none" stroke="#17951f" stroke-width="2.3" stroke-linecap="round" stroke-linejoin="round"/></svg></i></div><div class="c ic" style="left:1316px;width:148px"><i class="crs"><svg width="17" height="17" viewBox="0 0 17 17"><path d="M1.5 1.5 L15.5 15.5 M15.5 1.5 L1.5 15.5" fill="none" stroke="#dc1c1c" stroke-width="2" stroke-linecap="round"/></svg></i></div><div class="c ic" style="left:1464px;width:150px;border-right:none"><i class="eye"><svg width="23" height="14" viewBox="0 0 23 14"><path d="M0.8 6.6 C4.5 1.8 8 0.9 11.5 0.9 C15 0.9 18.5 1.8 22.2 6.6 C18.5 11.4 15 12.3 11.5 12.3 C8 12.3 4.5 11.4 0.8 6.6 Z" fill="none" stroke="#22377f" stroke-width="1.15"/><path d="M8.2 1.6 A5.8 5.8 0 0 0 8.2 11.6 M14.8 1.6 A5.8 5.8 0 0 1 14.8 11.6" fill="none" stroke="#22377f" stroke-width="1.1"/><circle cx="11.5" cy="6.6" r="3.2" fill="none" stroke="#22377f" stroke-width="1.25"/><path d="M11.5 3.4 A3.2 3.2 0 0 1 14.7 6.6 L11.5 6.6 Z" fill="#22377f" opacity=".5"/></svg></i></div></div><div class="r alt" style="top:598px"><div class="c" style="left:0;width:364px"><span style="font-size:13.25px">1CLick Chemistry Test</span></div><div class="c" style="left:364px;width:363px"><span class="sj">Error in OneClickChemistry</span></div><div class="c" style="left:727px;width:220px"><span class="dt">21/02/2025 06:04:AM</span></div><div class="c" style="left:947px;width:221px"><span class="dt">20/02/2025 10:06:PM</span></div><div class="c ic" style="left:1168px;width:148px"><i class="chk"><svg width="16" height="12" viewBox="0 0 16 12"><path d="M1.6 6.2 L5.9 10.4 L14.4 1.6" fill="none" stroke="#17951f" stroke-width="2.3" stroke-linecap="round" stroke-linejoin="round"/></svg></i></div><div class="c ic" style="left:1316px;width:148px"><i class="crs"><svg width="17" height="17" viewBox="0 0 17 17"><path d="M1.5 1.5 L15.5 15.5 M15.5 1.5 L1.5 15.5" fill="none" stroke="#dc1c1c" stroke-width="2" stroke-linecap="round"/></svg></i></div><div class="c ic" style="left:1464px;width:150px;border-right:none"><i class="eye"><svg width="23" height="14" viewBox="0 0 23 14"><path d="M0.8 6.6 C4.5 1.8 8 0.9 11.5 0.9 C15 0.9 18.5 1.8 22.2 6.6 C18.5 11.4 15 12.3 11.5 12.3 C8 12.3 4.5 11.4 0.8 6.6 Z" fill="none" stroke="#22377f" stroke-width="1.15"/><path d="M8.2 1.6 A5.8 5.8 0 0 0 8.2 11.6 M14.8 1.6 A5.8 5.8 0 0 1 14.8 11.6" fill="none" stroke="#22377f" stroke-width="1.1"/><circle cx="11.5" cy="6.6" r="3.2" fill="none" stroke="#22377f" stroke-width="1.25"/><path d="M11.5 3.4 A3.2 3.2 0 0 1 14.7 6.6 L11.5 6.6 Z" fill="#22377f" opacity=".5"/></svg></i></div></div><div class="r" style="top:644px"><div class="c" style="left:0;width:364px"><span style="font-size:13.25px">1CLick Chemistry Test</span></div><div class="c" style="left:364px;width:363px"><span class="sj">Error in OneClickChemistry</span></div><div class="c" style="left:727px;width:220px"><span class="dt">21/02/2025 06:04:AM</span></div><div class="c" style="left:947px;width:221px"><span class="dt">20/02/2025 10:06:PM</span></div><div class="c ic" style="left:1168px;width:148px"><i class="chk"><svg width="16" height="12" viewBox="0 0 16 12"><path d="M1.6 6.2 L5.9 10.4 L14.4 1.6" fill="none" stroke="#17951f" stroke-width="2.3" stroke-linecap="round" stroke-linejoin="round"/></svg></i></div><div class="c ic" style="left:1316px;width:148px"><i class="crs"><svg width="17" height="17" viewBox="0 0 17 17"><path d="M1.5 1.5 L15.5 15.5 M15.5 1.5 L1.5 15.5" fill="none" stroke="#dc1c1c" stroke-width="2" stroke-linecap="round"/></svg></i></div><div class="c ic" style="left:1464px;width:150px;border-right:none"><i class="eye"><svg width="23" height="14" viewBox="0 0 23 14"><path d="M0.8 6.6 C4.5 1.8 8 0.9 11.5 0.9 C15 0.9 18.5 1.8 22.2 6.6 C18.5 11.4 15 12.3 11.5 12.3 C8 12.3 4.5 11.4 0.8 6.6 Z" fill="none" stroke="#22377f" stroke-width="1.15"/><path d="M8.2 1.6 A5.8 5.8 0 0 0 8.2 11.6 M14.8 1.6 A5.8 5.8 0 0 1 14.8 11.6" fill="none" stroke="#22377f" stroke-width="1.1"/><circle cx="11.5" cy="6.6" r="3.2" fill="none" stroke="#22377f" stroke-width="1.25"/><path d="M11.5 3.4 A3.2 3.2 0 0 1 14.7 6.6 L11.5 6.6 Z" fill="#22377f" opacity=".5"/></svg></i></div></div><div class="r alt" style="top:690px"><div class="c" style="left:0;width:364px"><span style="font-size:13.25px">1CLick Chemistry Test</span></div><div class="c" style="left:364px;width:363px"><span class="sj">Error in OneClickChemistry</span></div><div class="c" style="left:727px;width:220px"><span class="dt">21/02/2025 06:01:AM</span></div><div class="c" style="left:947px;width:221px"><span class="dt">20/02/2025 10:02:PM</span></div><div class="c ic" style="left:1168px;width:148px"><i class="chk"><svg width="16" height="12" viewBox="0 0 16 12"><path d="M1.6 6.2 L5.9 10.4 L14.4 1.6" fill="none" stroke="#17951f" stroke-width="2.3" stroke-linecap="round" stroke-linejoin="round"/></svg></i></div><div class="c ic" style="left:1316px;width:148px"><i class="crs"><svg width="17" height="17" viewBox="0 0 17 17"><path d="M1.5 1.5 L15.5 15.5 M15.5 1.5 L1.5 15.5" fill="none" stroke="#dc1c1c" stroke-width="2" stroke-linecap="round"/></svg></i></div><div class="c ic" style="left:1464px;width:150px;border-right:none"><i class="eye"><svg width="23" height="14" viewBox="0 0 23 14"><path d="M0.8 6.6 C4.5 1.8 8 0.9 11.5 0.9 C15 0.9 18.5 1.8 22.2 6.6 C18.5 11.4 15 12.3 11.5 12.3 C8 12.3 4.5 11.4 0.8 6.6 Z" fill="none" stroke="#22377f" stroke-width="1.15"/><path d="M8.2 1.6 A5.8 5.8 0 0 0 8.2 11.6 M14.8 1.6 A5.8 5.8 0 0 1 14.8 11.6" fill="none" stroke="#22377f" stroke-width="1.1"/><circle cx="11.5" cy="6.6" r="3.2" fill="none" stroke="#22377f" stroke-width="1.25"/><path d="M11.5 3.4 A3.2 3.2 0 0 1 14.7 6.6 L11.5 6.6 Z" fill="#22377f" opacity=".5"/></svg></i></div></div><div class="r" style="top:736px"><div class="c" style="left:0;width:364px"><span style="font-size:13.25px">1CLick Chemistry Test</span></div><div class="c" style="left:364px;width:363px"><span class="sj">Reset password request in 1ClickChemistry</span></div><div class="c" style="left:727px;width:220px"><span class="dt">19/02/2025 10:22:AM</span></div><div class="c" style="left:947px;width:221px"><span class="dt">19/02/2025 02:24:AM</span></div><div class="c ic" style="left:1168px;width:148px"><i class="chk"><svg width="16" height="12" viewBox="0 0 16 12"><path d="M1.6 6.2 L5.9 10.4 L14.4 1.6" fill="none" stroke="#17951f" stroke-width="2.3" stroke-linecap="round" stroke-linejoin="round"/></svg></i></div><div class="c ic" style="left:1316px;width:148px"><i class="crs"><svg width="17" height="17" viewBox="0 0 17 17"><path d="M1.5 1.5 L15.5 15.5 M15.5 1.5 L1.5 15.5" fill="none" stroke="#dc1c1c" stroke-width="2" stroke-linecap="round"/></svg></i></div><div class="c ic" style="left:1464px;width:150px;border-right:none"><i class="eye"><svg width="23" height="14" viewBox="0 0 23 14"><path d="M0.8 6.6 C4.5 1.8 8 0.9 11.5 0.9 C15 0.9 18.5 1.8 22.2 6.6 C18.5 11.4 15 12.3 11.5 12.3 C8 12.3 4.5 11.4 0.8 6.6 Z" fill="none" stroke="#22377f" stroke-width="1.15"/><path d="M8.2 1.6 A5.8 5.8 0 0 0 8.2 11.6 M14.8 1.6 A5.8 5.8 0 0 1 14.8 11.6" fill="none" stroke="#22377f" stroke-width="1.1"/><circle cx="11.5" cy="6.6" r="3.2" fill="none" stroke="#22377f" stroke-width="1.25"/><path d="M11.5 3.4 A3.2 3.2 0 0 1 14.7 6.6 L11.5 6.6 Z" fill="#22377f" opacity=".5"/></svg></i></div></div>
  </div>
  <div id="sb"></div>
  <div id="sbt"></div>

  <div class="pl" style="left:10px;top:887px">Page</div>
  <div class="abs" style="left:51px;top:881px;width:40px;height:30px;border:1px solid #e2e4e8;font-size:13.5px;line-height:28px;padding-left:6px;color:#222">1</div>
  <div class="pl" style="left:100px;top:887px">of</div>
  <div class="pl" style="left:123px;top:887px">21</div>

  <div class="pl" style="left:622px;top:887px">Page Size:</div>
  <div class="abs" style="left:708px;top:881px;width:60px;height:30px;border:1px solid #e2e4e8;background:#fff">
    <div class="abs" style="left:8px;top:6px;font-size:15px;font-weight:bold;color:#0f2479">25</div>
    <svg class="abs" style="left:35px;top:10px" width="13" height="9" viewBox="0 0 13 9"><path d="M1.2 1.5 L6.5 7 L11.8 1.5" fill="none" stroke="#0c2a8a" stroke-width="1.8"/></svg>
  </div>

  <div class="pb" style="left:1251px"><svg width="14" height="14" viewBox="0 0 14 14" style="margin-top:7px"><path d="M3 1.5 V12.5" stroke="#1a3490" stroke-width="1.8"/><path d="M11 2 L6 7 L11 12" fill="none" stroke="#1a3490" stroke-width="1.8"/></svg></div>
  <div class="pb" style="left:1294px"><svg width="14" height="14" viewBox="0 0 14 14" style="margin-top:7px"><path d="M9.5 2 L4.5 7 L9.5 12" fill="none" stroke="#1a3490" stroke-width="1.8"/></svg></div>
  <div class="pb" style="left:1337px;border:none;background:linear-gradient(90deg,#0a3698,#0a5ab0 50%,#1598c6);color:#fff">1</div>
  <div class="pb" style="left:1380px">2</div>
  <div class="pb" style="left:1423px">3</div>
  <div class="pb" style="left:1466px">4</div>
  <div class="pb" style="left:1509px">5</div>
  <div class="pb" style="left:1552px"><svg width="14" height="14" viewBox="0 0 14 14" style="margin-top:7px"><path d="M4.5 2 L9.5 7 L4.5 12" fill="none" stroke="#1a3490" stroke-width="1.8"/></svg></div>
  <div class="pb" style="left:1595px"><svg width="14" height="14" viewBox="0 0 14 14" style="margin-top:7px"><path d="M3 2 L8 7 L3 12" fill="none" stroke="#1a3490" stroke-width="1.8"/><path d="M11 1.5 V12.5" stroke="#1a3490" stroke-width="1.8"/></svg></div>
</div>
</div></body></html>
